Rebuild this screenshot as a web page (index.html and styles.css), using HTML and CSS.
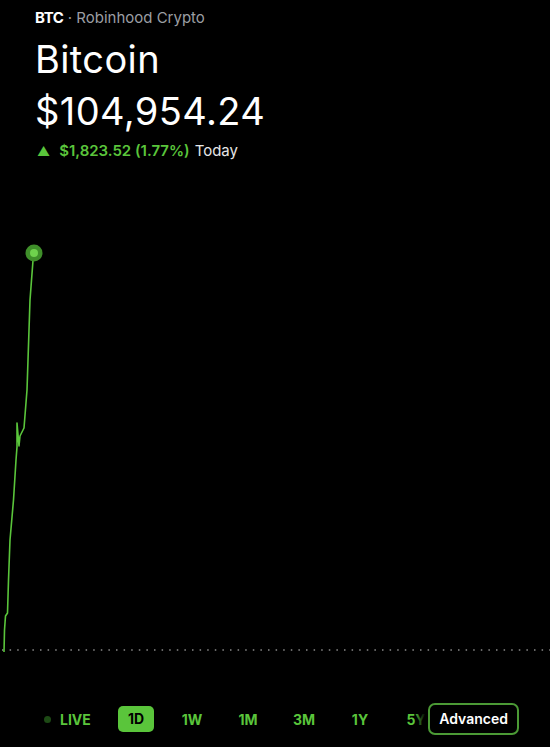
FILE: index.html
```html
<!DOCTYPE html>
<html lang="en">
<head>
    <meta charset="UTF-8">
    <meta name="viewport" content="width=device-width, initial-scale=1.0">
    <title>Bitcoin - Robinhood Crypto</title>
    <link rel="stylesheet" href="styles.css">
</head>
<body>
    <div class="screen">
        <!-- Header -->
        <div class="header">
            <div class="eyebrow"><span class="ticker">BTC</span> · Robinhood Crypto</div>
            <h1 class="name">Bitcoin</h1>
            <div class="price">$104,954.24</div>
            <div class="change">
                <span class="arrow">&#9650;</span>
                <span class="delta">$1,823.52 (1.77%)</span>
                <span class="period">Today</span>
            </div>
        </div>

        <!-- Chart -->
        <svg class="chart" width="550" height="510" viewBox="0 170 550 510">
            <line x1="2" y1="650" x2="550" y2="650" class="baseline"></line>
            <polyline class="line" points="4,652 4.5,630 5.5,616 7.5,613 8.5,580 10,540 13.5,500 16,460 17,447 17,423 19,446 20,436 22,432 24,428 27,390 30,300 33.5,254"></polyline>
            <circle cx="34" cy="253" r="8.5" class="dot-halo"></circle>
            <circle cx="34" cy="253" r="4" class="dot"></circle>
        </svg>

        <!-- Range tabs -->
        <div class="ranges">
            <div class="tab live"><span class="live-dot"></span>LIVE</div>
            <div class="tab"><span class="pill">1D</span></div>
            <div class="tab">1W</div>
            <div class="tab">1M</div>
            <div class="tab">3M</div>
            <div class="tab">1Y</div>
            <div class="tab">5Y</div>
            <button class="advanced">Advanced</button>
        </div>
    </div>
</body>
</html>
```

FILE: styles.css
```css
body {
    margin: 0;
    background-color: #000;
    color: #fff;
    font-family: Inter, "Liberation Sans", Arial, sans-serif;
}

.screen {
    width: 550px;
    height: 747px;
    overflow: hidden;
    position: relative;
}

.header {
    padding: 9px 35px 0;
}

.eyebrow {
    font-size: 15px;
    line-height: 18px;
    color: #9b9ea3;
}

.ticker {
    color: #fff;
    font-weight: 700;
    letter-spacing: -0.4px;
}

.name {
    margin: 10px 0 0;
    font-size: 38px;
    font-weight: 400;
    line-height: 44px;
    letter-spacing: 0.4px;
}

.price {
    margin-top: 8px;
    font-size: 38px;
    line-height: 44px;
    letter-spacing: 0.4px;
}

.change {
    margin-top: 9px;
    font-size: 15px;
    line-height: 18px;
    display: flex;
    align-items: center;
}

.arrow {
    color: #5ac53b;
    font-size: 13px;
    margin: 0 9px 0 2px;
}

.delta {
    color: #5ac53b;
    font-weight: 600;
    margin-right: 5px;
}

.period {
    color: #e6e6e6;
}

.chart {
    display: block;
    margin-top: 10px;
}

.baseline {
    stroke: #8a8a8a;
    stroke-width: 1.5;
    stroke-dasharray: 1.5 6.1;
}

.line {
    fill: none;
    stroke: #5ac53b;
    stroke-width: 1.6;
    stroke-linejoin: round;
}

.dot-halo {
    fill: #3f8f2a;
}

.dot {
    fill: #6fd34d;
}

.ranges {
    display: flex;
    align-items: center;
    height: 30px;
    margin-top: 24px;
    padding-left: 52px;
}

.tab {
    width: 56px;
    text-align: center;
    color: #5ac53b;
    font-size: 14px;
    font-weight: 700;
    flex-shrink: 0;
}

.live {
    display: flex;
    align-items: center;
    justify-content: flex-start;
    gap: 9px;
    margin-left: -8px;
    width: 64px;
}

.live-dot {
    width: 7px;
    height: 7px;
    border-radius: 50%;
    background-color: #1d4a15;
}

.pill {
    display: inline-block;
    background-color: #5ac53b;
    color: #000;
    padding: 4px 10px;
    border-radius: 5px;
    line-height: 18px;
}

.advanced {
    position: absolute;
    right: 31px;
    bottom: 12px;
    background-color: #000;
    color: #fff;
    font-family: inherit;
    font-size: 14px;
    font-weight: 600;
    border: 2px solid #4b9a35;
    border-radius: 7px;
    padding: 6px 9px;
    line-height: 16px;
}

.advanced::before {
    content: "";
    position: absolute;
    top: -2px;
    bottom: -2px;
    left: -16px;
    width: 14px;
    background: linear-gradient(to right, rgba(0, 0, 0, 0), #000 80%);
}
```
